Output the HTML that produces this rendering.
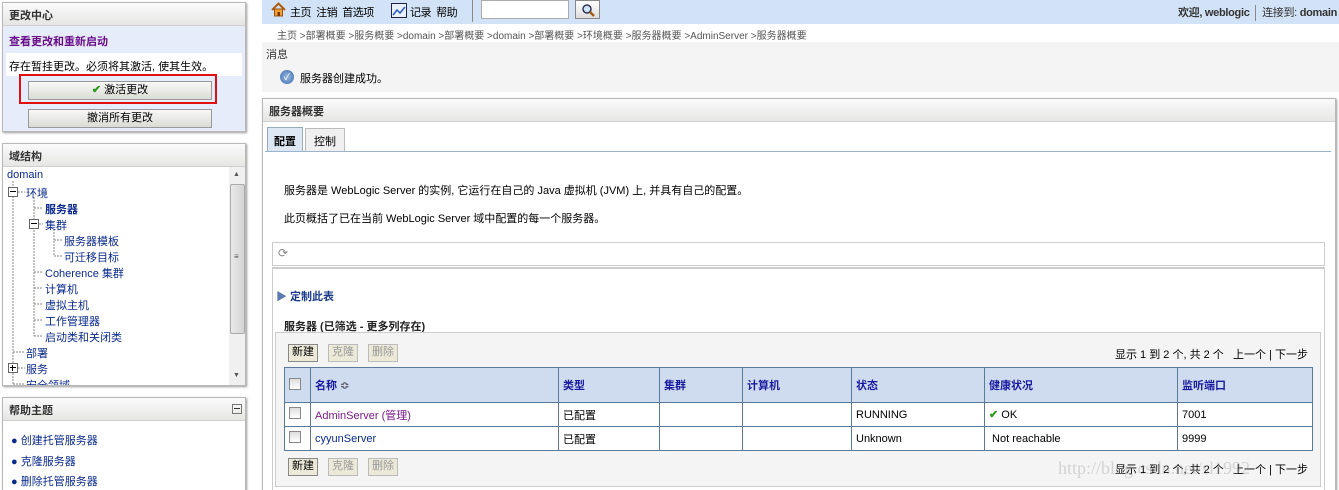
<!DOCTYPE html>
<html style="height:490px;overflow:hidden"><head><meta charset="utf-8"><style>
*{margin:0;padding:0;box-sizing:border-box}
body{width:1339px;height:490px;overflow:hidden;background:#fff;font-family:"Liberation Sans","Noto Sans CJK SC",sans-serif;font-size:11px;color:#000;position:relative}
.a{position:absolute;white-space:nowrap}
.hdr{background:linear-gradient(#fafafa,#e6e7e5);border-bottom:1px solid #d0d0d0;font-weight:bold;color:#333;padding:4px 6px;height:23px}
.panel{position:absolute;border:1px solid #b8b8b8;box-shadow:1px 1px 2px #999;overflow:hidden}
.btn{position:absolute;border:1px solid #999;background:linear-gradient(#f8f8f6,#dcdcd6);text-align:center;font-size:11px;line-height:16px}
.tb{position:absolute;border:1px solid #888;background:#ece9d8;font-size:11px;line-height:15px;padding:0 3px;height:18px}
.tb.d{color:#999;border-color:#bbb}
.blue{color:#0b2a8c}
table{border-collapse:collapse}
td,th{border:1px solid #5a7a9a;text-align:left;font-size:11px;padding:0 4px}
th{background:#cfdcef;color:#1a1aa0;height:35px}
.cb{display:inline-block;width:12px;height:12px;border:1px solid #888;background:linear-gradient(#ddd,#fff)}
.box{position:absolute;width:10px;height:10px;border:1px solid #666;background:#fff}
</style></head><body>

<div class="panel" style="left:2px;top:2px;width:244px;height:130px;background:#e6ecf9">
 <div class="hdr">更改中心</div>
 <div class="a" style="left:6px;top:30px;color:#6a0e8a;font-weight:bold">查看更改和重新启动</div>
 <div class="a" style="left:3px;top:50px;width:236px;height:23px;background:#fff;padding:5px 3px">存在暂挂更改。必须将其激活, 使其生效。</div>
 <div class="a" style="left:16px;top:71px;width:198px;height:30px;border:2px solid #e01010"></div>
 <div class="btn" style="left:25px;top:78px;width:184px;height:19px"><span style="color:#2a9a1a;font-weight:bold">✔</span> 激活更改</div>
 <div class="btn" style="left:25px;top:106px;width:184px;height:19px">撤消所有更改</div>
</div>

<div class="panel" style="left:2px;top:143px;width:244px;height:243px;background:#fff">
 <div class="hdr">域结构</div>
 <div class="a" style="left:226px;top:23px;width:17px;height:219px;background:#f0f0f0">
  <div class="a" style="left:4px;top:4px;font-size:7px;color:#555">▲</div>
  <div class="a" style="left:1px;top:17px;width:15px;height:150px;background:linear-gradient(90deg,#e8e8e8,#d4d4d4);border:1px solid #aaa;border-radius:2px"></div>
  <div class="a" style="left:5px;top:85px;font-size:8px;color:#555">≡</div>
  <div class="a" style="left:4px;top:205px;font-size:7px;color:#555">▼</div>
 </div>
 <svg class="a" style="left:0;top:23px" width="226" height="220" stroke="#888" stroke-dasharray="2,1" fill="none">
  <path d="M10 14V220M15 25h7M31 30V169M31 41h9M36 57h4M31 105h9M31 121h9M31 137h9M31 153h9M31 169h9M51 62v27M51 73h9M51 89h9M10 185h12M15 201h7M10 217h12"/>
 </svg>
 <div class="box" style="left:5px;top:43px"><div class="a" style="left:1px;top:3px;width:6px;height:1px;background:#000"></div></div>
 <div class="box" style="left:26px;top:75px"><div class="a" style="left:1px;top:3px;width:6px;height:1px;background:#000"></div></div>
 <div class="box" style="left:5px;top:219px"><div class="a" style="left:1px;top:3px;width:6px;height:1px;background:#000"></div><div class="a" style="left:3px;top:1px;width:1px;height:6px;background:#000"></div></div>
 <div class="blue">
 <div class="a" style="left:4px;top:25px">domain</div>
 <div class="a" style="left:23px;top:41px">环境</div>
 <div class="a" style="left:42px;top:57px;font-weight:bold">服务器</div>
 <div class="a" style="left:42px;top:73px">集群</div>
 <div class="a" style="left:61px;top:89px">服务器模板</div>
 <div class="a" style="left:61px;top:105px">可迁移目标</div>
 <div class="a" style="left:42px;top:121px">Coherence 集群</div>
 <div class="a" style="left:42px;top:137px">计算机</div>
 <div class="a" style="left:42px;top:153px">虚拟主机</div>
 <div class="a" style="left:42px;top:169px">工作管理器</div>
 <div class="a" style="left:42px;top:185px">启动类和关闭类</div>
 <div class="a" style="left:23px;top:201px">部署</div>
 <div class="a" style="left:23px;top:217px">服务</div>
 <div class="a" style="left:23px;top:233px">安全领域</div>
 </div>
</div>

<div class="panel" style="left:2px;top:397px;width:244px;height:100px;background:#fff">
 <div class="hdr">帮助主题</div>
 <div class="a" style="left:229px;top:6px;width:10px;height:10px;border:1px solid #777"><div class="a" style="left:1px;top:3px;width:6px;height:1px;background:#333"></div></div>
 <div class="a blue" style="left:8px;top:34px">● 创建托管服务器</div>
 <div class="a blue" style="left:8px;top:55px">● 克隆服务器</div>
 <div class="a blue" style="left:8px;top:75px">● 删除托管服务器</div>
</div>

<div class="a" style="left:262px;top:0;width:1077px;height:24px;background:#d2e3f7;font-size:11px">
 <svg class="a" style="left:9px;top:2px" width="15" height="15"><path d="M1 8L7.5 1.5L14 8" fill="none" stroke="#b05a10" stroke-width="2"/><rect x="3.5" y="7" width="8" height="7" fill="#f0a030" stroke="#9a5010"/><rect x="6.5" y="10" width="2.5" height="4" fill="#7a3a08"/></svg>
 <div class="a" style="left:28px;top:4px;letter-spacing:-0.5px">主页 &nbsp;注销 &nbsp;首选项</div>
 <svg class="a" style="left:129px;top:3px" width="16" height="15"><rect x="0.5" y="0.5" width="15" height="14" fill="#e8f0fa" stroke="#224"/><path d="M2 12L6 7L9 10L14 4" fill="none" stroke="#2a5ac0" stroke-width="1.5"/></svg>
 <div class="a" style="left:148px;top:4px;letter-spacing:-0.5px">记录 &nbsp;帮助</div>
 <div class="a" style="left:210px;top:0;width:1px;height:22px;background:#888"></div>
 <div class="a" style="left:219px;top:0;width:88px;height:19px;background:#fff;border:1px solid #aaa"></div>
 <div class="a" style="left:313px;top:0;width:25px;height:19px;border:1px solid #888;background:linear-gradient(#fff,#ddd)">
  <svg class="a" style="left:5px;top:2px" width="14" height="14"><circle cx="6" cy="6" r="4" fill="#cfe6ff" stroke="#335" stroke-width="1.5"/><path d="M9 9L13 13" stroke="#a06010" stroke-width="2.5"/></svg>
 </div>
 <div class="a" style="right:2px;top:4px;color:#333;letter-spacing:-0.3px"><b>欢迎, weblogic</b> <span style="display:inline-block;width:1px;height:16px;background:#888;vertical-align:middle;margin:0 3px"></span> 连接到: <b>domain</b></div>
</div>
<div class="a" style="left:277px;top:27px;color:#555;font-size:10px">主页 &gt;部署概要 &gt;服务概要 &gt;domain &gt;部署概要 &gt;domain &gt;部署概要 &gt;环境概要 &gt;服务器概要 &gt;AdminServer &gt;服务器概要</div>
<div class="a" style="left:262px;top:42px;width:1077px;height:50px;background:#f4f4f4">
 <div class="a" style="left:4px;top:4px;color:#333">消息</div>
 <div class="a" style="left:18px;top:28px;width:14px;height:14px;border-radius:50%;background:radial-gradient(#9bd,#3a6ab0);color:#fff;font-size:9px;text-align:center;line-height:14px">✓</div>
 <div class="a" style="left:38px;top:28px">服务器创建成功。</div>
</div>

<div class="panel" style="left:262px;top:98px;width:1074px;height:400px;background:#fff">
 <div class="hdr" style="height:23px">服务器概要</div>
 <div class="a" style="left:4px;top:28px;width:36px;height:24px;border:1px solid #9ab;border-bottom:none;background:#dde8f4;font-weight:bold;padding:5px 6px">配置</div>
 <div class="a" style="left:42px;top:29px;width:40px;height:23px;border:1px solid #bbb;border-bottom:none;background:#f0f0f0;padding:4px 8px">控制</div>
 <div class="a" style="left:2px;top:52px;width:1066px;height:1px;background:#9ab2cc"></div>
 <div class="a" style="left:21px;top:83px">服务器是 WebLogic Server 的实例, 它运行在自己的 Java 虚拟机 (JVM) 上, 并具有自己的配置。</div>
 <div class="a" style="left:21px;top:111px">此页概括了已在当前 WebLogic Server 域中配置的每一个服务器。</div>
 <div class="a" style="left:9px;top:143px;width:1053px;height:24px;border:1px solid #ccc">
  <div class="a" style="left:5px;top:3px;color:#888;font-size:12px">⟳</div>
 </div>
 <div class="a" style="left:9px;top:168px;width:1053px;height:240px;border:1px solid #ccc;border-top-width:2px"></div>
 <div class="a" style="left:13px;top:189px;color:#1a3a8a;font-weight:bold"><span style="color:#5a7ab0">▶</span> 定制此表</div>
 <div class="a" style="left:21px;top:219px;font-weight:bold;color:#222">服务器 (已筛选 - 更多列存在)</div>
 <div class="a" style="left:12px;top:233px;width:1046px;height:155px;background:#f4f4f4;border:1px solid #ccc"></div>
</div>
<div class="tb" style="left:288px;top:344px">新建</div>
<div class="tb d" style="left:328px;top:344px">克隆</div>
<div class="tb d" style="left:368px;top:344px">删除</div>
<div class="a" style="left:1115px;top:346px">显示 1 到 2 个, 共 2 个 &nbsp; 上一个 | 下一步</div>
<table class="a" style="left:284px;top:367px;width:1029px;background:#fff">
 <tr><th style="width:26px"><span class="cb"></span></th><th style="width:248px">名称 <span style="color:#667">≎</span></th><th style="width:101px">类型</th><th style="width:83px">集群</th><th style="width:109px">计算机</th><th style="width:133px">状态</th><th style="width:193px">健康状况</th><th>监听端口</th></tr>
 <tr style="height:24px"><td><span class="cb"></span></td><td style="color:#7a1a8a">AdminServer (管理)</td><td>已配置</td><td></td><td></td><td>RUNNING</td><td><span style="color:#2a9a1a;font-weight:bold">✔</span> OK</td><td>7001</td></tr>
 <tr style="height:24px"><td><span class="cb"></span></td><td class="blue">cyyunServer</td><td>已配置</td><td></td><td></td><td>Unknown</td><td>&nbsp;Not reachable</td><td>9999</td></tr>
</table>
<div class="tb" style="left:288px;top:458px">新建</div>
<div class="tb d" style="left:328px;top:458px">克隆</div>
<div class="tb d" style="left:368px;top:458px">删除</div>
<div class="a" style="left:1115px;top:461px">显示 1 到 2 个, 共 2 个 &nbsp; 上一个 | 下一步</div>
<div class="a" style="left:1058px;top:458px;font-family:'Liberation Serif',serif;font-size:18px;color:rgba(150,150,150,0.35)">http://blog.csdn.net/sl1992</div>
</body></html>
